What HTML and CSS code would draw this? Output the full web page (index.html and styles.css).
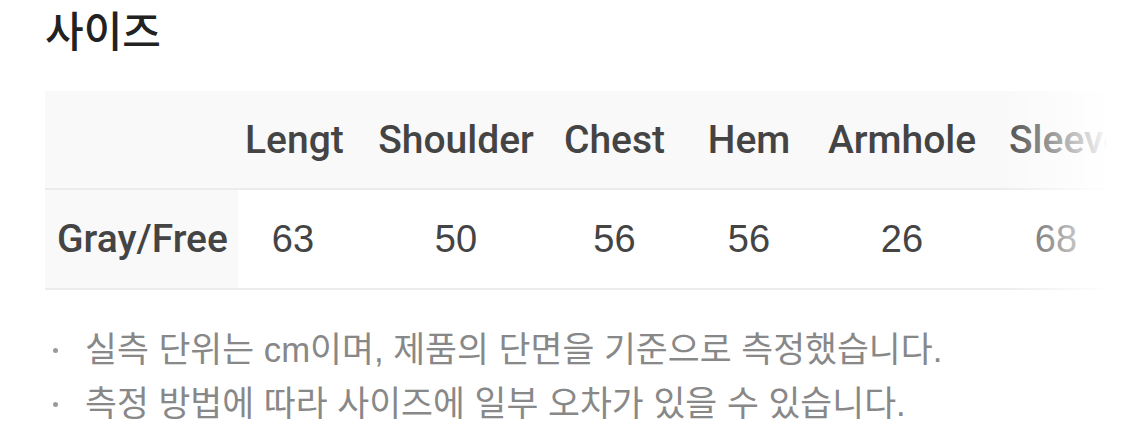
FILE: index.html
```html
<!DOCTYPE html>
<html lang="ko">
<head>
<meta charset="utf-8">
<title>사이즈</title>
<link rel="stylesheet" href="styles.css">
</head>
<body>
<main class="page">
  <h2 class="title">사이즈</h2>
  <div class="table-wrap">
    <div class="size-table">
      <div class="cell head corner"></div>
      <div class="cell head left-clip"><span class="clip">Length</span></div>
      <div class="cell head">Shoulder</div>
      <div class="cell head">Chest</div>
      <div class="cell head">Hem</div>
      <div class="cell head">Armhole</div>
      <div class="cell head sleeve">Sleeve</div>

      <div class="cell name">Gray/Free</div>
      <div class="cell val">63</div>
      <div class="cell val">50</div>
      <div class="cell val">56</div>
      <div class="cell val">56</div>
      <div class="cell val">26</div>
      <div class="cell val">68</div>
    </div>
    <div class="fade"></div>
  </div>
  <ul class="notes">
    <li>실측 단위는 cm이며, 제품의 단면을 기준으로 측정했습니다.</li>
    <li>측정 방법에 따라 사이즈에 일부 오차가 있을 수 있습니다.</li>
  </ul>
</main>
</body>
</html>
```

FILE: styles.css
```css
html, body {
  margin: 0;
  padding: 0;
  background: #ffffff;
}

body {
  font-family: "Liberation Sans", "Noto Sans CJK KR", sans-serif;
  color: #444444;
}

.page {
  padding-left: 45px;
  width: 1065px;
}

.title {
  margin: 0;
  height: 91px;
  line-height: 58px;
  font-family: "Noto Sans CJK KR", sans-serif;
  font-size: 42px;
  font-weight: 500;
  color: #222222;
}

.table-wrap {
  position: relative;
  width: 1061px;
  overflow: hidden;
}

.size-table {
  display: grid;
  grid-template-columns: 193px 110px 216px 101px 168px 138px 170px;
  grid-template-rows: 99px 100px;
  width: max-content;
  background: linear-gradient(to bottom, #f9f9f9 99px, transparent 99px);
}

.cell {
  display: flex;
  align-items: center;
  justify-content: center;
  white-space: nowrap;
  font-size: 38px;
  border-bottom: 2px solid #ececec;
}

.head {
  font-family: "Roboto", "Liberation Sans", sans-serif;
  font-weight: 500;
  font-size: 39px;
  color: #444444;
}

.left-clip {
  justify-content: flex-start;
  padding-left: 7px;
}

.clip {
  display: block;
  width: 99px;
  overflow: hidden;
}

.sleeve {
  justify-content: flex-start;
  padding-left: 38px;
}

.name {
  justify-content: flex-start;
  padding-left: 12px;
  background: #f9f9f9;
  font-family: "Roboto", "Liberation Sans", sans-serif;
  font-weight: 500;
  font-size: 39px;
  color: #444444;
}

.val {
  font-weight: 400;
  color: #444444;
}

.fade {
  position: absolute;
  top: 0;
  right: 0;
  width: 106px;
  height: 100%;
  background: linear-gradient(to right, rgba(255, 255, 255, 0), rgba(255, 255, 255, 0.95));
}

.notes {
  list-style: none;
  margin: 33px 0 0 0;
  padding: 0;
  font-family: "Liberation Sans", "Noto Sans CJK KR", sans-serif;
  font-size: 34.7px;
  line-height: 54px;
  color: #888888;
}

.notes li {
  display: flex;
  align-items: center;
}

.notes li::before {
  content: "";
  width: 5px;
  height: 5px;
  border-radius: 50%;
  background: #9a9a9a;
  margin-left: 8px;
  margin-right: 27px;
  flex: none;
}
```
